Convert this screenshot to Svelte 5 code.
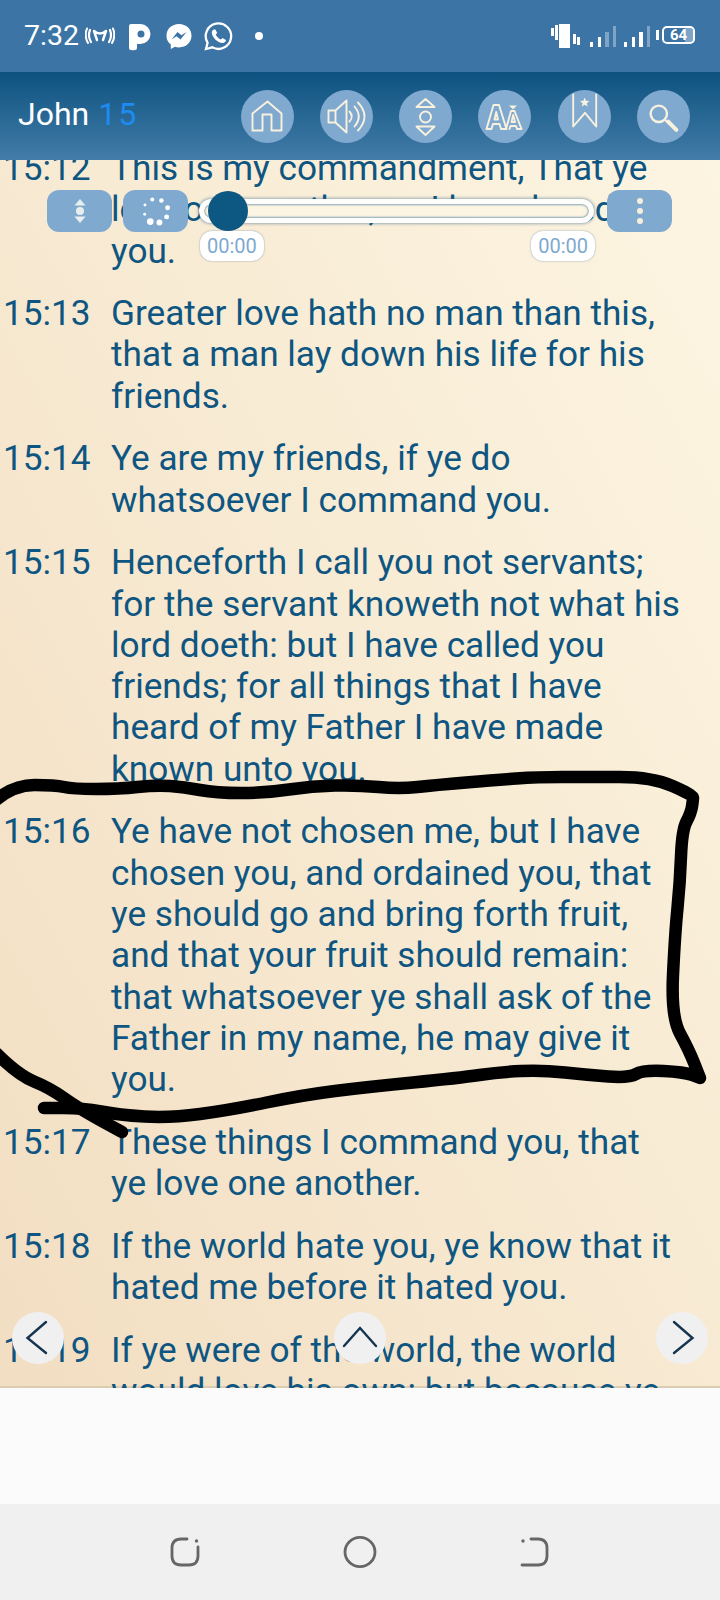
<script>
  const verses = [
    { ref: "15:12", lines: ["This is my commandment, That ye", "love one another, as I have loved", "you."] },
    { ref: "15:13", lines: ["Greater love hath no man than this,", "that a man lay down his life for his", "friends."] },
    { ref: "15:14", lines: ["Ye are my friends, if ye do", "whatsoever I command you."] },
    { ref: "15:15", lines: ["Henceforth I call you not servants;", "for the servant knoweth not what his", "lord doeth: but I have called you", "friends; for all things that I have", "heard of my Father I have made", "known unto you."] },
    { ref: "15:16", lines: ["Ye have not chosen me, but I have", "chosen you, and ordained you, that", "ye should go and bring forth fruit,", "and that your fruit should remain:", "that whatsoever ye shall ask of the", "Father in my name, he may give it", "you."] },
    { ref: "15:17", lines: ["These things I command you, that", "ye love one another."] },
    { ref: "15:18", lines: ["If the world hate you, ye know that it", "hated me before it hated you."] },
    { ref: "15:19", lines: ["If ye were of the world, the world", "would love his own: but because ye"] }
  ]

  // hand-drawn marker outline round verse 16
  const outline = [[-4,800],[14,785],[55,785],[73,789],[119,789],[156,785],[184,787],[216,793],[266,793],[312,786],[358,785],[399,789],[436,785],[496,780],[537,777],[588,777],[652,777],[693,795],[693,800],[691,813],[682,830],[680,883],[675,933],[671,1017],[689,1050],[700,1078],[700,1078],[684,1072],[643,1070],[629,1078],[588,1075],[542,1070],[500,1072],[459,1078],[367,1087],[303,1095],[230,1110],[170,1118],[119,1115],[83,1108],[44,1108]]
  const tail = [[-4,1053],[18,1075],[50,1088],[78,1108],[122,1132]]

  function smooth(pts) {
    let d = `M${pts[0][0]} ${pts[0][1]}`
    for (let i = 1; i < pts.length - 1; i++) {
      const mx = (pts[i][0] + pts[i + 1][0]) / 2
      const my = (pts[i][1] + pts[i + 1][1]) / 2
      d += ` Q${pts[i][0]} ${pts[i][1]} ${mx} ${my}`
    }
    const last = pts[pts.length - 1]
    return d + ` L${last[0]} ${last[1]}`
  }

  const spinner = [[152.7,198.3,2],[162,199.3,2.3],[168.3,206.7,2.5],[167.3,216,2.5],[160,221.7,3],[150.7,220.7,3.4],[145,213.3,1.5],[145.3,204,1.5]]
</script>

<div class="phone">
  <div class="status">
    <div class="status-left">
      <span class="clock">7:32</span>
      <svg class="hotspot" width="30" height="20" viewBox="0 0 30 20" fill="none" stroke="#fff" stroke-linecap="round">
        <path d="M9 5 L12 14 M9 5 Q15 10 21 5 M21 5 L18 14" stroke-width="2.400"/>
        <path d="M5 4 Q2.500 10 6 16 M25 4 Q27.500 10 24 16" stroke-width="2.200"/>
        <path d="M2 2.500 Q-1 10 3 17 M28 2.500 Q31 10 27 17" stroke-width="2"/>
      </svg>
      <svg class="pin" width="22" height="28" viewBox="0 0 22 28">
        <path fill="#fff" fill-rule="evenodd" d="M0 3 Q0 1 2 1 H11.500 A10 10 0 0 1 11.500 21 H8 V25 Q8 27 6 27 Q0 28 0 25Z M12 7.500 A3.500 3.500 0 1 0 12 14.500 A3.500 3.500 0 1 0 12 7.500Z"/>
      </svg>
      <svg class="msg" width="26" height="27" viewBox="0 0 26 27">
        <path fill="#fff" d="M13 1 C5.800 1 0.500 6 0.500 12.800 C0.500 16.500 2 19.500 4.800 21.600 V26 L9 23.800 C10.300 24.200 11.600 24.400 13 24.400 C20.200 24.400 25.500 19.400 25.500 12.800 C25.500 6 20.200 1 13 1Z"/>
        <path fill="#3d74a6" d="M5.500 16.500 L11.500 9 L15.500 12.300 L20.500 9 L14.500 16.500 L10.500 13.200Z"/>
      </svg>
      <svg class="wa" width="29" height="29" viewBox="0 0 29 29">
        <path fill="none" stroke="#fff" stroke-width="2.300" d="M2 27 L3.600 20.800 A12.700 12.700 0 1 1 8.300 25.300Z"/>
        <path fill="#fff" d="M10.300 7.500 C9 7.500 7.800 9 7.800 10.800 C7.800 15 13.500 21 18.500 21 C20.500 21 22 19.600 21.900 18 L18.500 16 L16.800 17.600 C14.800 16.800 12.500 14.500 11.700 12.500 L13.200 11 L11.400 7.500Z"/>
      </svg>
      <span class="dot"></span>
    </div>
    <svg class="status-right" width="150" height="36" viewBox="0 0 150 36" fill="#fff">
      <rect x="1" y="13" width="3" height="8"/>
      <rect x="5" y="10" width="3" height="15"/>
      <rect x="9" y="9" width="11" height="24"/>
      <rect x="23" y="19" width="3" height="10"/>
      <rect x="27" y="22" width="3" height="8"/>
      <rect x="40" y="27" width="3" height="5"/>
      <rect x="48" y="22" width="3" height="10"/>
      <rect x="55" y="17" width="4" height="15" opacity=".35"/>
      <rect x="63" y="11" width="3" height="21" opacity=".35"/>
      <rect x="74" y="27" width="3" height="5"/>
      <rect x="82" y="22" width="3" height="10"/>
      <rect x="89" y="17" width="4" height="15"/>
      <rect x="97" y="11" width="3" height="21" opacity=".35"/>
      <rect x="106" y="15" width="3" height="10"/>
    </svg>
    <div class="battery"><span class="battery-level"></span><span class="battery-num">64</span></div>
  </div>

  <div class="reader">
    <div class="verses">
      {#each verses as v}
        <div class="verse">
          <span class="ref">{v.ref}</span>
          <div class="body">
            {#each v.lines as line}<div>{line}</div>{/each}
          </div>
        </div>
      {/each}
    </div>

    <header class="topbar">
      <h1 class="title">John <span class="chapter">15</span></h1>
      <div class="tools">
        <button class="tool" aria-label="Home">
          <svg viewBox="0 0 53 53"><path d="M26.500 11.500 L40.500 23.500 V40.500 H30.500 V24.500 H21.500 V40.500 H11.500 V23.500Z"/></svg>
        </button>
        <button class="tool" aria-label="Audio">
          <svg viewBox="0 0 53 53">
            <path d="M8.500 20.500 H15.500 L26.500 10.500 V42.500 L15.500 32.500 H8.500Z M15.500 20.500 V32.500"/>
            <path d="M29.500 21.500 Q34 26.500 29.500 31.500 M34.500 16.500 Q43 26.500 34.500 36.500 M38 12.500 Q51 26.500 38 40.500"/>
          </svg>
        </button>
        <button class="tool" aria-label="Scroll">
          <svg viewBox="0 0 53 53">
            <path d="M26.500 9 L35.500 17 H17.500Z"/>
            <circle cx="26.500" cy="27" r="5.500"/>
            <path d="M17.500 36.500 H35.500 L26.500 45Z"/>
          </svg>
        </button>
        <button class="tool" aria-label="Text size">
          <svg viewBox="0 0 53 53">
            <path d="M8.500 39 L15.500 15 H21 L28.500 39 H23 L21.500 34 H15 L13.500 39Z M16.500 29.500 H20 L18.200 22Z"/>
            <path d="M28 39 L33 21 H36.500 L43.500 39 H39 L38 36 H32.500 L31.500 39 M33.500 32 H37 L35.200 25Z"/>
            <path class="solid" d="M31 15.500 H39 L35 19.500Z"/>
          </svg>
        </button>
        <button class="tool" aria-label="Bookmarks">
          <svg viewBox="0 0 53 53">
            <path d="M15.200 4.500 V36.500 L27 22.800 L38.200 36.500 V4.500"/>
            <path class="solid" d="M26.700 7.500 L28 10.800 L31.500 11 L28.800 13.200 L29.700 16.600 L26.700 14.700 L23.700 16.600 L24.600 13.200 L21.900 11 L25.400 10.800Z"/>
          </svg>
        </button>
        <button class="tool" aria-label="Search">
          <svg viewBox="0 0 53 53">
            <circle cx="21.800" cy="23.800" r="8.200" stroke-width="2.400"/>
            <path d="M28 30 L31 32.500" stroke-width="2"/>
            <path d="M31 31.500 L39.300 39.800" stroke-width="4"/>
          </svg>
        </button>
      </div>
    </header>

    <div class="player">
      <button class="pad" aria-label="Move">
        <svg width="20" height="26" viewBox="0 0 20 26" fill="#e9eeec">
          <path d="M10 1 L15.500 7.500 H4.500Z"/>
          <circle cx="10" cy="13" r="4"/>
          <path d="M4.500 18.500 H15.500 L10 25Z"/>
        </svg>
      </button>
      <button class="pad spin" aria-label="Loading">
        <svg width="66" height="42" viewBox="123 189 66 42" fill="#fff">
          {#each spinner as s}
            <circle cx={s[0]} cy={s[1]} r={s[2]} />
          {/each}
        </svg>
      </button>
      <div class="track">
        <span class="knob"></span>
        <span class="time start">00:00</span>
        <span class="time end">00:00</span>
      </div>
      <button class="pad kebab" aria-label="More">
        <span></span><span></span><span></span>
      </button>
    </div>

    <div class="pager">
      <button class="page" aria-label="Previous chapter">
        <svg width="52" height="52" viewBox="0 0 52 52"><path d="M34 10 L15.500 26 L34 41"/></svg>
      </button>
      <button class="page" aria-label="Top">
        <svg width="52" height="52" viewBox="0 0 52 52"><path d="M10 34 L26 16 L42 34"/></svg>
      </button>
      <button class="page" aria-label="Next chapter">
        <svg width="52" height="52" viewBox="0 0 52 52"><path d="M18 10 L36.500 26 L18 41"/></svg>
      </button>
    </div>
  </div>

  <div class="blank"></div>

  <nav class="softkeys">
    <svg width="30" height="30" viewBox="0 0 30 30">
      <path d="M17 2 H11 Q2 2 2 11 V19 Q2 28 11 28 H19 Q28 28 28 19 V10"/>
      <circle cx="26.500" cy="4" r="1.700" class="key-dot"/>
    </svg>
    <svg width="34" height="34" viewBox="0 0 34 34">
      <ellipse cx="17" cy="17" rx="15" ry="14.600"/>
    </svg>
    <svg width="30" height="30" viewBox="0 0 30 30">
      <path d="M11 2 H18 Q27 2 27 11 V19 Q27 28 18 28 H2"/>
      <circle cx="3" cy="4" r="1.700" class="key-dot"/>
    </svg>
  </nav>

  <svg class="ink" width="720" height="1600" viewBox="0 0 720 1600" fill="none" stroke="#000" stroke-width="12.500" stroke-linecap="round" stroke-linejoin="round">
    <path d={smooth(outline)} />
    <path d={smooth(tail)} />
  </svg>
</div>

<style>
  :global(body) {
    margin: 0;
    background: #fff;
  }

  .phone {
    position: relative;
    width: 720px;
    height: 1600px;
    overflow: hidden;
    display: flex;
    flex-direction: column;
    font-family: Roboto, "Liberation Sans", sans-serif;
  }

  button {
    border: 0;
    padding: 0;
    font: inherit;
  }

  .status {
    position: relative;
    height: 72px;
    flex: none;
    background: #3d74a6;
    display: flex;
    align-items: center;
    justify-content: space-between;
    padding: 0 26px 0 24px;
    box-sizing: border-box;
  }

  .status-left {
    display: flex;
    align-items: center;
  }

  .clock {
    color: #fff;
    font-size: 28.500px;
    width: 61px;
    line-height: 1;
  }

  .hotspot {
    width: 30px;
    margin-right: 14px;
  }

  .pin {
    margin: 2px 15px 0 0;
  }

  .msg {
    margin-right: 12px;
  }

  .dot {
    width: 8px;
    height: 8px;
    margin-left: 22px;
    border-radius: 50%;
    background: #fff;
  }

  .status-right {
    position: absolute;
    left: 550px;
    top: 15px;
  }

  .battery {
    position: absolute;
    left: 662px;
    top: 26px;
    width: 33px;
    height: 18px;
    box-sizing: border-box;
    border: 2px solid #fff;
    border-radius: 5px;
    display: flex;
    align-items: center;
    justify-content: center;
    overflow: hidden;
  }

  .battery-level {
    position: absolute;
    right: 0;
    top: 0;
    bottom: 0;
    width: 8px;
    background: rgba(255, 255, 255, 0.35);
  }

  .battery-num {
    position: relative;
    color: #fff;
    font-size: 15px;
    font-weight: 700;
    line-height: 1;
  }

  .reader {
    position: relative;
    height: 1316px;
    flex: none;
    overflow: hidden;
    background: linear-gradient(to top right, #f2dec2, #fdf6e3);
    box-shadow: inset 0 -2px 0 #dcccb2;
  }

  .verses {
    padding: 76px 0 0 3px;
    color: #0e5681;
    font-size: 35.200px;
    line-height: 41.300px;
  }

  .verse {
    display: flex;
    margin-bottom: 21.300px;
    white-space: nowrap;
  }

  .ref {
    width: 108px;
    flex: none;
  }

  .topbar {
    position: absolute;
    left: 0;
    top: 0;
    width: 100%;
    height: 88px;
    background: linear-gradient(#0d5280, #437ca8);
    display: flex;
    align-items: center;
    justify-content: space-between;
    padding: 0 30px 0 18px;
    box-sizing: border-box;
  }

  .title {
    margin: 0;
    color: #fff;
    font-size: 32px;
    font-weight: 400;
    line-height: 1;
    position: relative;
    top: -2px;
  }

  .chapter {
    color: #1d8bf0;
    margin-left: 1px;
    letter-spacing: 2px;
  }

  .tools {
    display: flex;
    gap: 26.300px;
  }

  .tool {
    width: 53px;
    height: 53px;
    border-radius: 50%;
    background: #80a9d0;
    display: block;
  }

  .tool svg {
    display: block;
    width: 53px;
    height: 53px;
    fill: none;
    stroke: #f8f1de;
    stroke-width: 1.900;
    stroke-linejoin: round;
    stroke-linecap: round;
  }

  .tool .solid {
    fill: #f8f1de;
    stroke: none;
  }

  .player {
    position: absolute;
    left: 47px;
    top: 118px;
    display: flex;
    align-items: center;
    gap: 11px;
  }

  .pad {
    width: 65px;
    height: 42px;
    border-radius: 12px;
    background: #80a9d0;
    display: flex;
    align-items: center;
    justify-content: center;
    flex: none;
  }

  .spin svg {
    display: block;
  }

  .kebab {
    flex-direction: column;
    gap: 4px;
    margin-left: 2px;
  }

  .kebab span {
    width: 6px;
    height: 6px;
    border-radius: 50%;
    background: #f6eeda;
  }

  .track {
    position: relative;
    width: 395px;
    height: 24px;
    box-sizing: border-box;
    border: 5px solid #fdfdfb;
    border-radius: 12px;
    background: #fcf5e2;
    box-shadow:
      0 0 3px 1px rgba(40, 90, 130, 0.45),
      inset 0 0 2px 1px rgba(40, 100, 150, 0.55);
  }

  .knob {
    position: absolute;
    left: 4px;
    top: -13px;
    width: 40px;
    height: 40px;
    border-radius: 50%;
    background: #0d5783;
  }

  .time {
    position: absolute;
    top: 27px;
    height: 30px;
    box-sizing: border-box;
    padding: 0 7px;
    border-radius: 12px;
    background: #fff;
    box-shadow: 0 0 2px rgba(60, 100, 140, 0.6);
    color: #7fa9d0;
    font-size: 20px;
    line-height: 30px;
  }

  .start {
    left: -4px;
  }

  .end {
    right: -6px;
  }

  .pager {
    position: absolute;
    left: 12px;
    right: 12px;
    top: 1240px;
    display: flex;
    justify-content: space-between;
  }

  .page {
    width: 52px;
    height: 52px;
    border-radius: 50%;
    background: #f0f0f0;
    display: block;
  }

  .page svg {
    display: block;
    fill: none;
    stroke: #15344f;
    stroke-width: 2.400;
    stroke-linecap: round;
    stroke-linejoin: miter;
  }

  .blank {
    height: 116px;
    flex: none;
    background: #fbfbfb;
  }

  .softkeys {
    height: 96px;
    flex: none;
    background: #f0f0f0;
    display: flex;
    align-items: center;
    justify-content: center;
    gap: 143px;
  }

  .softkeys svg {
    fill: none;
    stroke: #666;
    stroke-width: 2.800;
    stroke-linecap: round;
  }

  .softkeys .key-dot {
    fill: #666;
    stroke: none;
  }

  .ink {
    position: absolute;
    left: 0;
    top: 0;
    pointer-events: none;
  }
</style>
